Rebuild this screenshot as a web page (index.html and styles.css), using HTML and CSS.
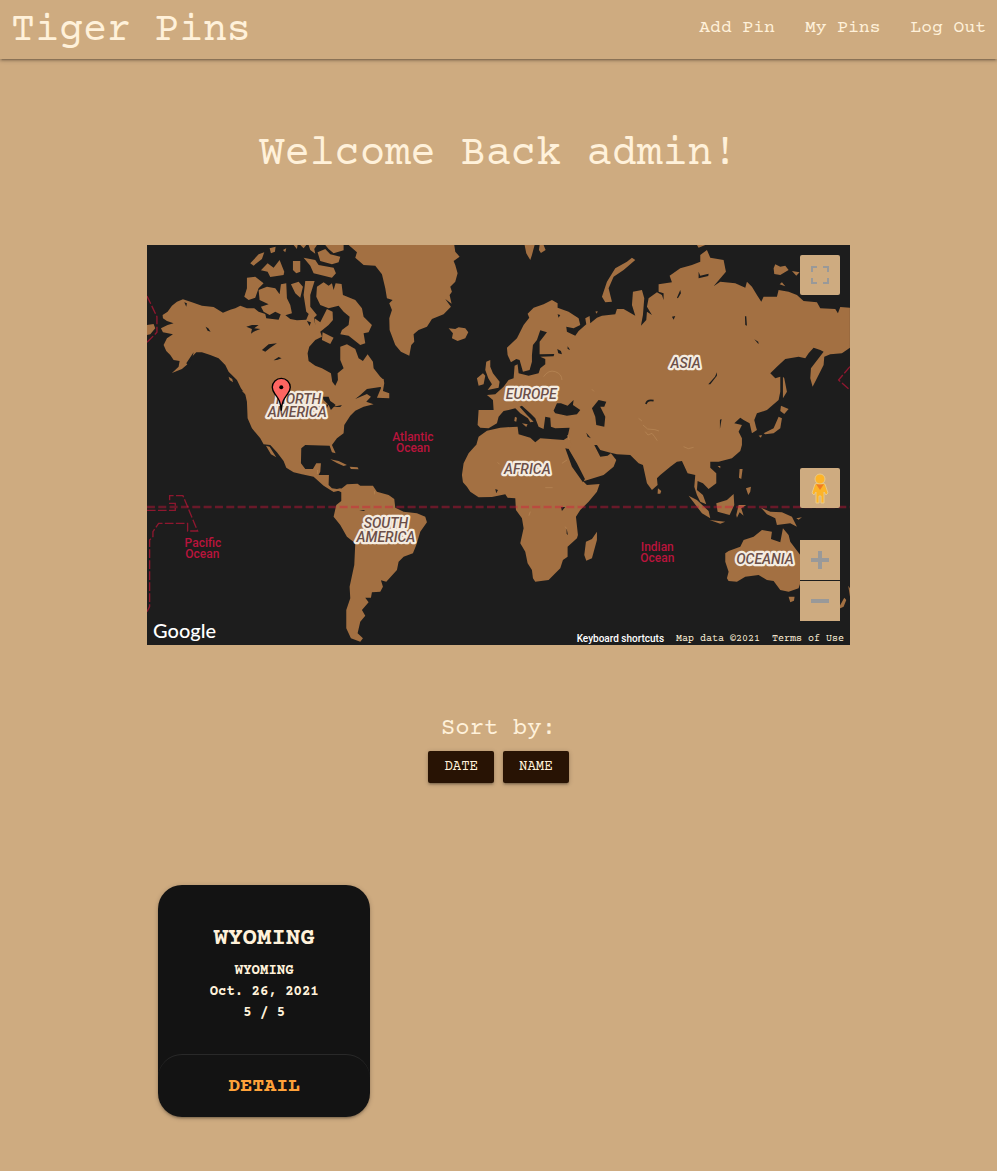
FILE: index.html
```html
<!DOCTYPE html>
<html lang="en">
<head>
<meta charset="utf-8">
<meta name="viewport" content="width=device-width, initial-scale=1">
<title>Tiger Pins</title>
<link rel="stylesheet" href="styles.css">
</head>
<body>
<header class="site-header">
  <a class="logo" href="#">Tiger Pins</a>
  <nav class="site-nav">
    <a href="#">Add Pin</a>
    <a href="#">My Pins</a>
    <a href="#">Log Out</a>
  </nav>
</header>
<main class="page">
  <h1 class="welcome">Welcome Back admin!</h1>

  <section class="map" aria-label="Map">
    <svg class="map-canvas" viewBox="0 0 2109 1200" preserveAspectRatio="xMidYMid slice">
      <g class="land">
        <!-- North America -->
        <path d="M47 210L62 200 75 182 90 170 108 163 135 172 165 182 200 186 228 203 250 194 265 190 280 182 300 190 322 190 335 200 355 207 358 220 395 224 402 206 412 208 430 222 450 226 478 224 488 200 500 212 505 240 503 220 520 232 540 192 557 200 558 225 545 240 520 260 525 275 505 285 487 305 482 325 485 348 505 362 525 370 552 385 556 410 565 422 573 405 572 385 590 370 580 345 580 305 600 298 625 312 635 340 648 348 662 328 678 350 680 370 700 395 705 400 705 425 660 432 640 450 625 462 660 447 672 455 658 470 680 478 650 485 625 497 610 512 592 540 590 565 570 580 555 600 566 625 555 622 548 602 475 600 463 610 462 655 475 672 498 672 508 655 522 655 520 680 515 690 546 690 545 720 555 730 570 732 580 730 588 738 572 738 560 741 530 722 500 695 465 688 440 682 418 668 410 648 390 622 370 600 350 598 340 580 315 550 302 520 300 470 295 448 282 430 270 405 245 380 235 360 215 340 190 330 165 322 148 322 135 335 125 355 105 372 75 384 95 365 98 348 80 345 70 330 58 318 50 300 60 280 78 268 48 262 42 250 62 240 80 235 60 228 48 220Z"/>
        <path d="M357 602L368 605 388 637 372 628ZM700 400L710 402 712 415 708 438 727 445 727 460 690 458 702 430ZM0 240L20 237 25 250 10 268 0 270ZM550 643L575 648 600 660 590 663 570 654ZM608 665L632 667 635 673 612 672ZM245 395L256 402 258 412 248 405ZM285 438L300 440 312 455 300 452Z"/>
        <!-- Arctic islands -->
        <path d="M300 98L325 95 350 115 335 130 325 158 305 165 292 155 300 130ZM335 135L360 125 385 130 398 148 402 118 418 115 420 160 430 180 435 205 410 212 385 200 368 210 350 200 342 185 365 178 338 165ZM310 55L335 28 352 22 345 42 320 62ZM342 76L362 55 380 68 398 45 412 80 410 90 370 96 362 80ZM438 48H460V80L448 85 438 75ZM470 38L505 45 515 60 560 68 567 85 555 98 500 85 490 62ZM368 10L386 5 384 20 372 25ZM432 118L455 110 468 125 460 158 445 145ZM475 108L503 108 490 150 490 185 510 210 500 220 478 200 470 150ZM510 125L530 112 545 122 555 115 560 135 566 115 584 117 588 150 625 165 645 190 650 215 675 240 665 262 650 265 655 295 640 300 605 272 580 268 585 255 605 240 608 215 590 200 575 182 545 190 520 180 508 155ZM527 262L560 278 550 297 525 285ZM512 22L535 12 550 28 580 35 575 52 555 58 520 48ZM535 0H590V16L560 25 545 12ZM440 0H452L450 12ZM460 0H478L470 10ZM485 0H510L502 12 505 26 490 15ZM408 15L418 10 415 22Z"/>
        <!-- Greenland and Iceland -->
        <path d="M605 0L630 22 625 38 650 60 685 62 705 88 715 130 720 160 737 165 727 175 735 195 727 220 728 255 745 300 762 320 787 332 793 300 802 290 800 268 815 255 840 245 855 222 890 208 912 185 895 162 914 176 908 150 915 140 910 125 925 110 932 85 925 60 920 48 938 35 925 20 922 0ZM905 250L925 252 935 247 955 250 964 262 955 280 932 288 915 280 918 265Z"/>
        <!-- Europe and Asia -->
        <path d="M1080 308L1110 280 1130 240 1147 218 1142 206 1160 188 1190 178 1215 165 1232 175 1232 188 1265 200 1295 220 1300 240 1280 250 1258 245 1260 260 1285 272 1295 258 1318 238 1315 220 1328 213 1330 235 1350 218 1365 212 1405 208 1410 192 1430 192 1465 212 1455 180 1458 140 1485 135 1492 160 1488 210 1482 242 1498 225 1500 200 1515 210 1500 185 1505 160 1530 142 1545 150 1550 165 1550 145 1535 140 1535 118 1575 112 1568 92 1600 70 1635 60 1660 50 1660 30 1680 15 1690 38 1730 45 1737 80 1700 124 1720 110 1765 115 1795 128 1800 110 1815 125 1830 150 1843 170 1850 155 1890 155 1895 135 1925 140 1950 150 1970 168 2010 172 2020 190 2065 192 2073 205 2080 186 2109 188 2109 308 2085 325 2050 328 2032 335 2030 360 2010 400 1997 425 1990 400 1992 370 2030 320 2020 315 2000 308 1985 325 1975 340 1955 335 1915 342 1890 365 1870 385 1885 400 1900 395 1900 440 1895 465 1860 495 1830 505 1822 525 1827 545 1830 555 1815 565 1808 535 1790 525 1780 518 1762 535 1785 540 1775 560 1785 580 1785 600 1780 618 1755 640 1715 650 1690 650 1690 668 1708 685 1708 715 1685 732 1668 715 1652 708 1650 735 1668 750 1678 778 1660 770 1650 750 1642 725 1645 690 1622 685 1605 648 1590 650 1570 665 1540 690 1530 700 1532 720 1515 735 1500 715 1488 660 1475 655 1450 630 1410 628 1385 622 1360 615 1350 600 1342 600 1360 635 1382 632 1392 625 1408 645 1400 665 1370 690 1312 708 1305 690 1290 660 1265 615 1262 575 1268 548 1225 550 1212 545 1210 518 1195 515 1190 552 1175 545 1165 520 1150 505 1125 482 1118 485 1140 510 1160 530 1150 532 1143 520 1120 505 1105 490 1085 495 1070 498 1055 515 1050 535 1025 550 1000 548 992 540 995 495 1040 495 1038 465 1020 450 1045 448 1070 425 1085 405 1100 400 1103 362 1112 358 1115 385 1145 392 1175 385 1180 370 1195 358 1195 342 1180 335 1220 334 1222 327 1178 328 1178 290 1200 262 1180 256 1170 285 1158 300 1155 330 1155 350 1148 375 1128 380 1118 345 1108 342 1092 352 1082 330Z"/>
        <path d="M1018 350L1030 345 1030 365 1038 385 1058 410 1055 428 1022 435 1035 418 1024 400 1015 375ZM990 400L1008 385 1015 392 1010 418 995 422ZM1133 0H1163L1155 30 1150 45 1138 25ZM1178 0H1190L1196 15 1182 24 1176 15ZM1104 515L1110 518 1108 530 1102 528ZM1125 535L1142 538 1138 546ZM1365 155L1380 110 1405 70 1440 50 1455 38 1465 45 1430 75 1400 95 1385 130 1395 170 1375 172ZM1650 0H1675L1655 8ZM1880 70L1885 58 1900 65 1915 62 1925 75 1900 90 1882 87ZM1935 78L1958 82 1948 92ZM1898 118L1905 112 1915 124ZM1345 200L1352 198 1350 206Z"/>
        <!-- Africa -->
        <path d="M988 600L995 575 1020 557 1060 548 1112 545 1115 568 1150 578 1165 592 1180 580 1250 585 1265 575 1275 600 1262 615 1270 640 1285 670 1305 705 1320 720 1358 717 1350 740 1325 770 1300 795 1287 815 1293 870 1290 880 1262 905 1262 935 1248 945 1240 970 1205 1005 1165 1010 1158 1000 1155 975 1142 955 1135 920 1120 895 1130 850 1125 820 1107 795 1105 760 1082 758 1075 748 1035 756 995 757 970 740 960 725 948 712 945 690 950 655 965 625 985 602ZM1350 860L1350 885 1335 940 1318 947 1312 930 1317 890 1335 882Z"/>
        <!-- South America -->
        <path d="M570 735L585 730 600 718 632 716 640 722 678 722 690 740 725 750 742 762 745 788 770 800 810 805 835 815 840 832 820 860 808 900 798 925 770 935 755 950 750 975 718 1010 702 1006 708 1025 700 1040 675 1042 672 1058 655 1058 665 1072 645 1095 655 1112 640 1130 632 1165 648 1180 640 1190 612 1180 598 1150 598 1095 610 1060 608 1025 622 960 625 895 600 875 580 840 560 815 568 780 583 768 583 742Z"/>
        <!-- East Asian islands and Oceania -->
        <path d="M1850 565L1880 550 1895 515 1905 520 1900 550 1880 565 1855 568ZM1835 572L1845 570 1842 578ZM1902 482L1925 492 1912 507 1900 498ZM1908 395L1912 400 1920 440 1908 460ZM1778 672H1787L1783 702 1776 698ZM1797 730L1812 725 1810 740 1804 750ZM1712 663H1720V670ZM1533 730L1543 738 1540 746 1532 746ZM1625 752L1650 765 1685 798 1690 820 1665 805ZM1688 825L1735 830 1720 836ZM1708 775L1740 765 1760 747 1762 780 1748 810 1712 800ZM1768 810L1775 780 1798 780 1783 790 1790 812 1778 802 1770 818ZM1842 788L1858 795 1870 800 1905 802 1935 815 1950 845 1930 835 1890 840 1885 820 1860 808ZM1948 820L1965 817 1955 824ZM1735 925L1745 918 1780 905 1790 885 1820 875 1845 855 1875 860 1872 882 1900 892 1908 850 1925 870 1930 890 1960 930 1965 1000 1955 1030 1925 1040 1900 1035 1880 1008 1860 1005 1835 990 1795 995 1770 1010 1745 1008 1740 1000 1745 980 1735 950ZM1925 1055H1943L1941 1067 1930 1072ZM2080 1080L2092 1058 2098 1065 2090 1085 2075 1092ZM2104 1022L2109 1030V1055Z"/>
      </g>
      <!-- Inland seas and lakes -->
      <g class="water">
        <path d="M298 245L315 240 335 240 322 250 340 252 320 260 312 266 315 252ZM345 315L365 298 390 295 370 308 355 320ZM380 346L395 336 404 340 390 345ZM176 245L184 250 191 260 182 257ZM112 172L120 175 118 185ZM527 455L545 455 550 468 560 475 566 480 552 495 545 480 530 465ZM530 480L545 478 540 490ZM560 485L585 480 580 486ZM480 228L492 232 488 243ZM118 355L140 322 136 340 125 362Z"/>
        <path d="M1220 497L1230 475 1242 475 1262 482 1280 465 1278 480 1300 495 1290 508 1260 512 1225 505ZM1335 490L1355 465 1378 470 1372 485 1360 485 1375 515 1372 545 1348 540 1345 515ZM1231 312L1242 318 1245 328 1234 325ZM1262 304L1270 315 1262 312ZM1232 208L1240 210 1235 218ZM1318 563L1332 580 1322 575ZM1255 610L1265 612 1290 655 1314 702 1308 712 1275 665ZM1710 382V392L1690 418 1684 418 1704 395ZM1794 214H1798L1800 242 1795 240ZM1822 283L1834 290 1835 298ZM1655 80L1660 92 1685 86 1684 93 1655 100ZM1600 135L1602 145 1593 160 1590 158ZM1575 215L1585 213 1580 224ZM1242 786H1255L1245 798ZM1259 850L1263 870 1259 866ZM1045 732L1053 735 1048 745ZM637 795H655L650 798ZM1719 524L1724 522 1719 552Z"/>
        <path class="lake-line" d="M1497 477Q1500 463 1520 467"/>
      </g>
      <path class="relief" d="M1475 520l10 8M1488 540l14 12 22 2 12 4M1495 560l8 10 12-5 8 10 8 12M1190 395q15-22 35-15t20 25M1245 655l15-10M1195 728h22M1052 652l6 6M1150 800l-4 12M1255 845l4 6M1335 433l6 6M512 675v12M683 738v10M1610 605l14 6 16-4M1262 570l5 15"/>
      <path class="equator" d="M0 786H2109"/>
      <path class="date-line" d="M0 153L30 215V262L0 292M0 796H85V775H68V752H108L152 858H122V835H35L18 860V875L8 885V1085L0 1100M2109 365L2075 405 2109 435"/>
      <g class="continent">
        <text x="455" y="478">NORTH</text><text x="451" y="517">AMERICA</text>
        <text x="717" y="849">SOUTH</text><text x="717" y="890">AMERICA</text>
        <text x="1153" y="462">EUROPE</text>
        <text x="1616" y="370">ASIA</text>
        <text x="1141" y="687">AFRICA</text>
        <text x="1854" y="958">OCEANIA</text>
      </g>
      <g class="ocean">
        <text><tspan x="798" y="587">Atlantic</tspan><tspan x="798" y="621">Ocean</tspan></text>
        <text><tspan x="168" y="906">Pacific</tspan><tspan x="166" y="940">Ocean</tspan></text>
        <text><tspan x="1531" y="918">Indian</tspan><tspan x="1531" y="952">Ocean</tspan></text>
      </g>
      <path class="marker" d="M403 497C401 468 394 461 384 447 379 440 376 434 376 427A27 27 0 0 1 430 427C430 434 427 440 422 447 412 461 405 468 403 497Z"/>
      <circle cx="403" cy="427" r="6"/>
    </svg>

    <button class="control fullscreen" type="button" aria-label="Toggle fullscreen view">
      <svg width="18" height="18" viewBox="0 0 18 18"><path d="M0 0H6V2H2V6H0ZM12 0H18V6H16V2H12ZM0 12H2V16H6V18H0ZM16 12H18V18H12V16H16Z" fill="#999"/></svg>
    </button>
    <div class="control-stack">
      <button class="control pegman" type="button" aria-label="Drag Pegman onto the map to open Street View">
        <svg width="18" height="32" viewBox="0 0 18 32">
          <path d="M4 12Q9 10 14 12L17 21 15 23 13 20V31H10V24H8V31H5V20L3 23 1 21Z" fill="#fdb429" stroke="#e8c98a" stroke-width="1"/>
          <circle cx="9" cy="7" r="5" fill="#fdb429" stroke="#e8c98a" stroke-width="1"/>
          <path d="M5 12Q9 13 13 12L9 18Z" fill="#ef7b25"/>
        </svg>
      </button>
      <div class="zoom">
        <button class="control" type="button" aria-label="Zoom in">
          <svg width="18" height="18" viewBox="0 0 18 18"><path d="M7 0H11V7H18V11H11V18H7V11H0V7H7Z" fill="#999"/></svg>
        </button>
        <button class="control" type="button" aria-label="Zoom out">
          <svg width="18" height="18" viewBox="0 0 18 18"><path d="M0 7H18V11H0Z" fill="#999"/></svg>
        </button>
      </div>
    </div>
    <div class="map-footer">
      <a class="google" href="#">Google</a>
      <div class="credits">
        <button class="shortcuts" type="button">Keyboard shortcuts</button>
        <span>Map data ©2021</span>
        <a href="#">Terms of Use</a>
      </div>
    </div>
  </section>

  <section class="sort">
    <h2>Sort by:</h2>
    <div class="sort-buttons">
      <button type="button">DATE</button>
      <button type="button">NAME</button>
    </div>
  </section>

  <section class="pins">
    <article class="card">
      <div class="card-body">
        <h3>WYOMING</h3>
        <p>WYOMING</p>
        <p>Oct. 26, 2021</p>
        <p>5 / 5</p>
      </div>
      <a class="card-action" href="#">DETAIL</a>
    </article>
  </section>
</main>
</body>
</html>
```
FILE: styles.css
```css
* {
  box-sizing: border-box;
}

body {
  margin: 0;
  min-height: 100vh;
  background: #ceab80;
  color: #fff1da;
  font-family: "Courier Prime", "Liberation Mono", monospace;
}

a {
  color: inherit;
  text-decoration: none;
}

button {
  border: 0;
  padding: 0;
  font-family: inherit;
  color: inherit;
  cursor: pointer;
}

h1, h2, h3, p {
  margin: 0;
  font-weight: 400;
}

.site-header {
  display: flex;
  flex-wrap: wrap;
  align-items: flex-end;
  justify-content: space-between;
  min-height: 59px;
  padding: 5px 11px 0;
  box-shadow: 0 2px 2px 0 rgba(0, 0, 0, .14), 0 3px 1px -2px rgba(0, 0, 0, .12), 0 1px 5px 0 rgba(0, 0, 0, .2);
}

.logo {
  font-size: 40px;
  line-height: 54px;
}

.site-nav {
  display: flex;
  gap: 30px;
  padding-bottom: 19px;
  font-size: 18px;
  line-height: 24px;
}

.page {
  display: flex;
  flex-direction: column;
  align-items: center;
  padding: 73px 0 54px;
}

.welcome {
  margin-bottom: 67px;
  font-size: 42px;
  line-height: 46px;
  text-align: center;
}

.map {
  position: relative;
  width: 70.5%;
  height: 400px;
  overflow: hidden;
  background: #1d1d1d;
}

.map-canvas {
  display: block;
  width: 100%;
  height: 100%;
}

.land {
  fill: #a37042;
}

.water {
  fill: #1d1d1d;
}

.lake-line {
  fill: none;
  stroke: #1d1d1d;
  stroke-width: 5;
}

.relief {
  fill: none;
  stroke: #b98a58;
  stroke-width: 2;
}

.equator {
  fill: none;
  stroke: rgba(220, 20, 60, .4);
  stroke-width: 7;
  stroke-dasharray: 24 10;
}

.date-line {
  fill: none;
  stroke: rgba(220, 20, 60, .6);
  stroke-width: 4;
  stroke-dasharray: 26 7;
}

.continent {
  fill: #6b4f48;
  stroke: #f5ece0;
  stroke-width: 13;
  stroke-linejoin: round;
  paint-order: stroke;
  font: italic 500 42px Roboto, sans-serif;
  text-anchor: middle;
}

.ocean {
  fill: #b9143c;
  font: 500 36px Roboto, sans-serif;
  text-anchor: middle;
}

.marker {
  fill: #fe6561;
  stroke: #000;
  stroke-width: 4;
}

.control {
  display: flex;
  align-items: center;
  justify-content: center;
  width: 40px;
  height: 40px;
  background: #ceab80;
}

.fullscreen {
  position: absolute;
  top: 10px;
  right: 10px;
  border-radius: 2px;
}

.control-stack {
  position: absolute;
  right: 10px;
  bottom: 24px;
  display: flex;
  flex-direction: column;
  gap: 32px;
}

.pegman {
  border-radius: 2px;
}

.zoom {
  display: flex;
  flex-direction: column;
  gap: 1px;
  background: #1d1d1d;
}

.map-footer {
  position: absolute;
  inset: auto 0 0;
  display: flex;
  align-items: flex-end;
  justify-content: space-between;
  padding: 0 6px;
}

.google {
  color: #fff;
  font: 500 20px/30px Lato, sans-serif;
}

.credits {
  display: flex;
  gap: 12px;
  font-size: 10px;
  line-height: 12px;
}

.shortcuts {
  background: none;
  color: #fff;
  font: 500 10px/12px Roboto, sans-serif;
}

.sort {
  display: flex;
  flex-direction: column;
  align-items: center;
  gap: 8px;
  margin: 70px 0 102px;
}

.sort h2 {
  font-size: 24px;
  line-height: 28px;
}

.sort-buttons {
  display: flex;
  gap: 9px;
}

.sort-buttons button {
  height: 32px;
  padding: 0 16px;
  border-radius: 2px;
  background: #281304;
  box-shadow: 0 2px 2px 0 rgba(0, 0, 0, .14), 0 3px 1px -2px rgba(0, 0, 0, .12), 0 1px 5px 0 rgba(0, 0, 0, .2);
  font-size: 14px;
}

.pins {
  display: grid;
  grid-template-columns: repeat(3, 1fr);
  gap: 22px;
  width: 70.5%;
  padding: 0 11px;
}

.card {
  border-radius: 24px;
  background: #131313;
  box-shadow: 0 2px 2px 0 rgba(0, 0, 0, .14), 0 3px 1px -2px rgba(0, 0, 0, .12), 0 1px 5px 0 rgba(0, 0, 0, .2);
  text-align: center;
}

.card-body {
  padding: 40px 16px 30px;
}

.card h3 {
  margin-bottom: 8px;
  font-size: 24px;
  font-weight: 700;
  line-height: 28px;
}

.card p {
  font-size: 14px;
  font-weight: 700;
  line-height: 21px;
}

.card-action {
  display: block;
  padding: 20px 16px 18px;
  border-top: 1px solid #292929;
  border-radius: 24px;
  color: #ffa23a;
  font-size: 20px;
  font-weight: 700;
  line-height: 24px;
}
```
